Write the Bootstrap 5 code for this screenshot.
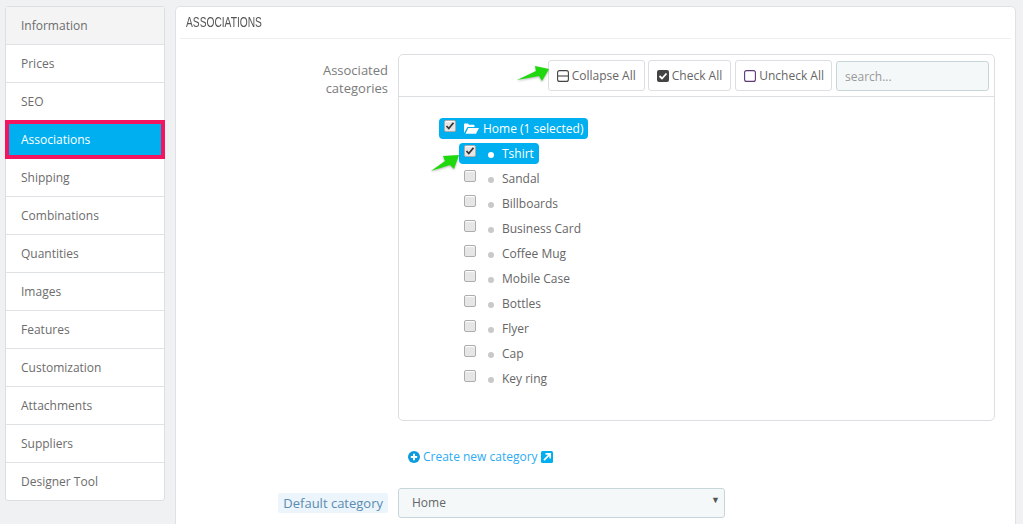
<!DOCTYPE html>
<html lang="en">
<head>
<meta charset="utf-8">
<title>Associations</title>
<link href="https://cdn.jsdelivr.net/npm/bootstrap@5.3.0/dist/css/bootstrap.min.css" rel="stylesheet">
<style>
html,body{height:524px;overflow:hidden}
body{background:#eff1f2;font-family:"Open Sans","Noto Sans",sans-serif;font-size:12px;color:#666;line-height:18px}
.shell{padding:6px 7px 0 5px;gap:10px}
.sidemenu{width:160px;flex:none;height:495px;border:1px solid #dcdfe2;border-radius:3px;background:#fff}
.sideitem{height:38px;padding:0 15px;display:flex;align-items:center;color:#6c6c6c;font-size:12px;text-decoration:none;border-bottom:1px solid #dfe2e5;position:relative}
.sideitem:last-child{border-bottom:0;height:37px}
.sideitem.first{background:#f4f4f4}
.sideitem.current{background:#00aff0;color:#fff;margin:-1px -1px 0 -1px;padding:3px 15px 0 16px;height:39px;outline:4px solid #f5145f;outline-offset:-4px;border-bottom:2px solid #00aff0}
.mainpanel{flex:1;min-width:0;height:540px;background:#fff;border:1px solid #dfe2e5;border-radius:5px;padding:0 4px}
.paneltitle{height:32px;border-bottom:1px solid #eeeff0;padding:5px 6px 0;color:#555;line-height:20px}
.titletext{display:inline-block;font-family:"Liberation Sans",sans-serif;font-size:14px;transform:scaleX(.73);transform-origin:left center}
.formline{display:flex}
.lbl{width:218px;flex:none;text-align:right;padding:22px 10px 0 0;color:#7b7b7b;font-size:13px;line-height:18px}
.lbl.flat{padding-top:0}
.treebox{width:597px;height:367px;border:1px solid #dcdfe2;border-radius:5px;margin-top:15px;position:relative}
.treetool{height:42px;border-bottom:1px solid #dcdfe2;padding:5px 5px 0 0;gap:3px;display:flex;justify-content:flex-end}
.toolbtn{height:31px;padding:0 8px;background:#fff;border:1px solid #dcdfe2;border-radius:3px;color:#666;font-size:12px;display:flex;align-items:center;gap:3px}
.toolbtn.lastbtn{padding-right:7px;margin-left:1px}
.toolsearch{width:153px;height:30px;background:#f5f8f9;border:1px solid #c7d6db;border-radius:3px;padding:0 8px;font-size:12px;font-family:inherit;color:#999;margin:1px 0 0 1px}
.toolsearch::placeholder{color:#999}
.treelist{list-style:none;margin:0;padding:21px 0 0 40px}
.treelist li{height:25px;display:flex;align-items:flex-start}
.nodeline{display:inline-flex;align-items:center;height:21px;border-radius:4px;padding:0 5px;color:#666}
.nodeline.on{background:#00aff0;color:#fff}
.childline{padding-left:20px}
.fakecheck{width:12px;height:12px;background:#e6e6e6;border:1px solid #adadad;border-radius:2px;flex:none;margin-top:-5px;box-shadow:inset 0 1px 1px #fff;display:block}
.dot{width:6px;height:6px;border-radius:50%;background:#c9c9c9;margin:3px 8px 0 12px;flex:none}
.on .dot{background:#fff}
.createrow{padding:27px 0 0 228px;height:67px}
.createlink{color:#2eacf2;text-decoration:none;display:inline-flex;align-items:center;gap:3px;font-size:12px}
.lblmark{background:#ebf5fb;color:#5b8bb0;border-radius:2px;padding:1px 5px}
.catselect{width:327px;height:30px;background:#f5f8f9;border:1px solid #c7d6db;border-radius:3px;padding:0 4px 0 13px;display:flex;align-items:center;justify-content:space-between;color:#666;font-size:12px}
.caret{font-size:9px;color:#555;margin-top:-6px}
.greenarrow{position:absolute;pointer-events:none;overflow:visible;filter:drop-shadow(0 1px 1px rgba(0,0,0,.3))}
.arrow1{left:118px;top:11px}
.arrow2{left:32px;top:99px}
</style>
</head>
<body>
<div class="d-flex shell">
  <nav class="sidemenu d-flex flex-column">
    <a class="sideitem first" href="#">Information</a>
    <a class="sideitem" href="#">Prices</a>
    <a class="sideitem" href="#">SEO</a>
    <a class="sideitem current" href="#">Associations</a>
    <a class="sideitem" href="#">Shipping</a>
    <a class="sideitem" href="#">Combinations</a>
    <a class="sideitem" href="#">Quantities</a>
    <a class="sideitem" href="#">Images</a>
    <a class="sideitem" href="#">Features</a>
    <a class="sideitem" href="#">Customization</a>
    <a class="sideitem" href="#">Attachments</a>
    <a class="sideitem" href="#">Suppliers</a>
    <a class="sideitem" href="#">Designer Tool</a>
  </nav>
  <main class="mainpanel">
    <div class="paneltitle"><span class="titletext">ASSOCIATIONS</span></div>
    <div class="formline">
      <div class="lbl">Associated<br>categories</div>
      <div class="treebox">
        <div class="treetool">
          <button class="toolbtn" type="button">
            <svg width="12" height="12" viewBox="0 0 12 12"><rect x=".6" y=".6" width="10.8" height="10.8" rx="2" fill="none" stroke="#444" stroke-width="1.1"/><path d="M.6 6h10.800" stroke="#444" stroke-width="1.1"/></svg>Collapse All</button>
          <button class="toolbtn" type="button">
            <svg width="12" height="12" viewBox="0 0 12 12"><rect width="12" height="12" rx="2" fill="#444"/><path d="M2.5 6l2.5 2.5 4.500-5" fill="none" stroke="#fff" stroke-width="1.8"/></svg>Check All</button>
          <button class="toolbtn lastbtn" type="button">
            <svg width="12" height="12" viewBox="0 0 12 12"><rect x=".6" y=".6" width="10.8" height="10.8" rx="2" fill="none" stroke="#5c3a78" stroke-width="1.1"/></svg>Uncheck All</button>
          <input class="toolsearch" type="text" placeholder="search...">
        </div>
        <ul class="treelist">
          <li><span class="nodeline on"><span class="fakecheck"><svg class="d-block" width="10" height="10" viewBox="0 0 10 10"><path d="M1.500 5l2.300 2.500L8.500 1.800" fill="none" stroke="#333" stroke-width="1.800"/></svg></span>
            <svg class="ms-2 me-1" width="15" height="11" viewBox="0 0 15 11"><path d="M0 10V1.500C0 .8.500.5 1 .5h3l1 1.300h4.500c.6 0 1 .4 1 1V4H3.500L0 10zm1.500.8L4.300 5H15l-3 5.800z" fill="#fff"/></svg>Home (1 selected)</span></li>
          <li class="childline"><span class="nodeline on"><span class="fakecheck"><svg class="d-block" width="10" height="10" viewBox="0 0 10 10"><path d="M1.500 5l2.300 2.500L8.500 1.800" fill="none" stroke="#333" stroke-width="1.800"/></svg></span><span class="dot"></span>Tshirt</span></li>
          <li class="childline"><span class="nodeline"><span class="fakecheck"></span><span class="dot"></span>Sandal</span></li>
          <li class="childline"><span class="nodeline"><span class="fakecheck"></span><span class="dot"></span>Billboards</span></li>
          <li class="childline"><span class="nodeline"><span class="fakecheck"></span><span class="dot"></span>Business Card</span></li>
          <li class="childline"><span class="nodeline"><span class="fakecheck"></span><span class="dot"></span>Coffee Mug</span></li>
          <li class="childline"><span class="nodeline"><span class="fakecheck"></span><span class="dot"></span>Mobile Case</span></li>
          <li class="childline"><span class="nodeline"><span class="fakecheck"></span><span class="dot"></span>Bottles</span></li>
          <li class="childline"><span class="nodeline"><span class="fakecheck"></span><span class="dot"></span>Flyer</span></li>
          <li class="childline"><span class="nodeline"><span class="fakecheck"></span><span class="dot"></span>Cap</span></li>
          <li class="childline"><span class="nodeline"><span class="fakecheck"></span><span class="dot"></span>Key ring</span></li>
        </ul>
        <svg class="greenarrow arrow1" width="32" height="15" viewBox="0 0 32 15"><path d="M0 14L19 5 18 0 32 3 25 15 22 10z" fill="#1fd80e"/></svg>
        <svg class="greenarrow arrow2" width="29" height="18" viewBox="0 0 29 18"><path d="M0 17L14 7 12 2 28 1 23 15 19 11z" fill="#1fd80e"/></svg>
      </div>
    </div>
    <div class="createrow"><a class="createlink" href="#">
      <svg width="12" height="12" viewBox="0 0 12 12"><circle cx="6" cy="6" r="6" fill="#0d9be0"/><path d="M6 2.800v6.400M2.800 6h6.400" stroke="#fff" stroke-width="2"/></svg><span>Create new category</span>
      <svg width="12" height="12" viewBox="0 0 12 12"><rect width="12" height="12" rx="1.500" fill="#00aff0"/><path d="M3 9.200L8.500 3.700M4.500 2.800h4.700v4.700" fill="none" stroke="#fff" stroke-width="1.700"/></svg></a></div>
    <div class="formline align-items-center">
      <div class="lbl flat"><span class="lblmark">Default category</span></div>
      <div class="catselect"><span>Home</span><span class="caret">▼</span></div>
    </div>
  </main>
</div>
<script src="https://cdn.jsdelivr.net/npm/bootstrap@5.3.0/dist/js/bootstrap.bundle.min.js"></script>
</body>
</html>
